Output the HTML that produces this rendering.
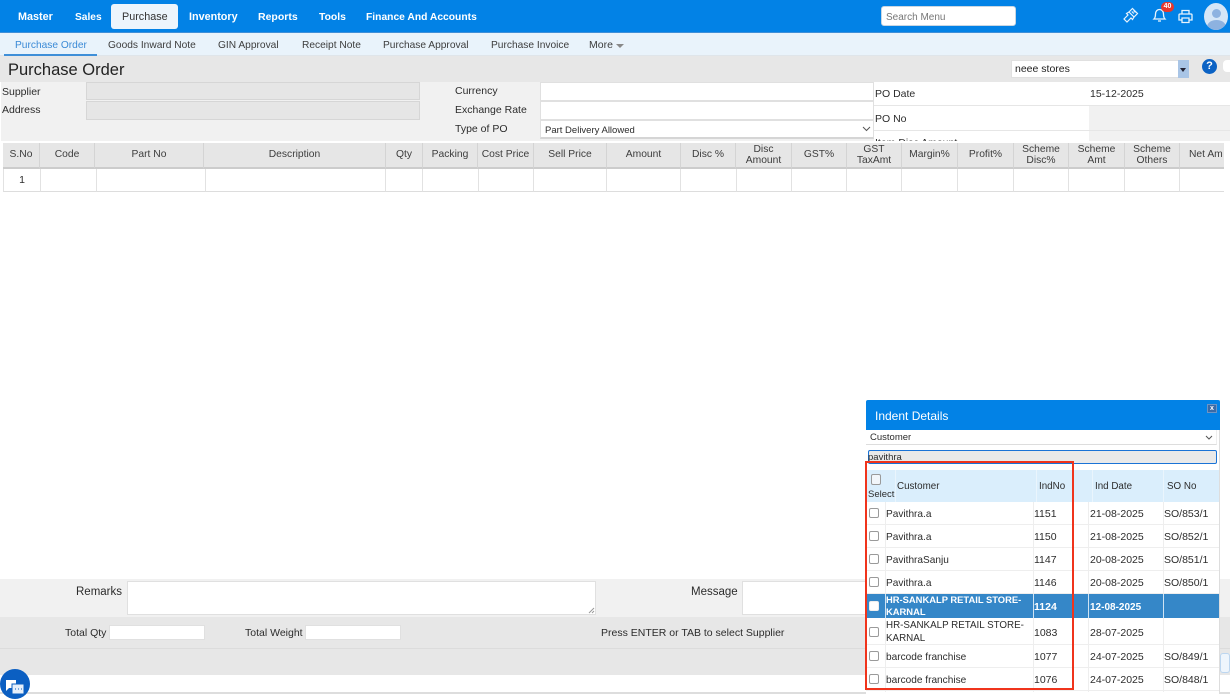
<!DOCTYPE html>
<html><head><meta charset="utf-8"><style>
*{box-sizing:border-box}
html,body{margin:0;padding:0;width:1230px;height:694px;overflow:hidden;background:#fff;font-family:"Liberation Sans",sans-serif;font-size:10.5px;color:#2c2c2c}
div,span,svg{position:absolute}
.t{white-space:nowrap;line-height:13px;margin-top:1px}
.n{color:#fff;font-weight:bold;font-size:10.8px;top:10px;line-height:14px;white-space:nowrap}
.s{top:39px;line-height:13px;white-space:nowrap;color:#3d3d3d;font-size:10.2px}
.h{top:143px;height:26px;background:#e6e6e6;border-right:1px solid #d4d4d4;border-bottom:2px solid #ccc;text-align:center;line-height:11.5px;display:flex;align-items:center;justify-content:center;color:#3d3d3d;font-size:10.3px;overflow:hidden;white-space:pre-line}
.c{top:169px;height:23px;background:#fff;border-right:1px solid #e2e2e2;border-bottom:1px solid #ddd}
.i{background:#fff;border:1px solid #e0e0e0}
.cb{width:10px;height:10px;left:869px;background:#fff;border:1px solid #9a9a9a;border-radius:2px}
.r{left:866px;width:353px;background:#fff;border-bottom:1px solid #eee}
.v{width:1px;background:#eee}
.w{font-size:10.1px}
</style></head><body>

<div style="left:0;top:0;width:1230px;height:32px;background:#0282e6"></div>
<div style="left:0;top:32px;width:1230px;height:1px;background:#3f8fd8"></div>
<div style="left:111px;top:4px;width:67px;height:25px;background:#ecf5fc;border-radius:3px"></div>
<span class="n" style="left:18px">Master</span>
<span class="n" style="left:75px;top:11px;font-size:10.2px">Sales</span>
<span class="n" style="left:122px;color:#333;font-weight:normal;font-size:10.8px">Purchase</span>
<span class="n" style="left:189px">Inventory</span>
<span class="n" style="left:258px;font-size:10.5px">Reports</span>
<span class="n" style="left:319px;top:11px;font-size:10.4px">Tools</span>
<span class="n" style="left:366px;top:11px;font-size:10.3px">Finance And Accounts</span>
<div style="left:881px;top:6px;width:135px;height:20px;background:#fff;border:1px solid #c9d6e2;border-radius:3px"></div>
<span class="t" style="left:886px;top:10px;color:#777;font-size:10px">Search Menu</span>
<svg style="left:1122px;top:7px" width="17" height="17" viewBox="0 0 17 17" fill="none" stroke="#e8f3fc" stroke-width="1.2"><path d="M10.500 1.500l5 5-3.500 3.500-5-5z"/><path d="M7 5L4.500 6.500l1.500 1.500-4 4 3 3 4-4 1.500 1.500L12 10"/><path d="M11.500 3.500l2 2M9.800 4.500l2 2"/></svg>
<svg style="left:1152px;top:7px" width="15" height="16" viewBox="0 0 15 16" fill="none" stroke="#e8f3fc" stroke-width="1.3"><path d="M2 12c1.500-1.500 1.500-3 1.500-5 0-2.500 1.600-4.500 4-4.500s4 2 4 4.500c0 2 0 3.500 1.500 5z"/><path d="M6 14h3"/></svg>
<div style="left:1161px;top:2px;width:13px;height:10px;border-radius:5px;background:#e8372c;color:#fff;font-size:7px;font-weight:bold;line-height:10px;text-align:center">40</div>
<svg style="left:1178px;top:9px" width="15" height="15" viewBox="0 0 15 15" fill="none" stroke="#e8f3fc" stroke-width="1.3"><path d="M4 5V1.500h7V5M2 5h11a1 1 0 0 1 1 1v5h-3M4 11H1V6a1 1 0 0 1 1-1M4 9h7v4.500H4z"/></svg>
<div style="left:1204px;top:3px;width:24px;height:27px;border-radius:50%;background:#d5e6f7;overflow:hidden">
<div style="left:8px;top:6px;width:9px;height:9px;border-radius:50%;background:#8db2e0"></div>
<div style="left:3px;top:17px;width:19px;height:14px;border-radius:50%;background:#8db2e0"></div></div>

<div style="left:0;top:33px;width:1230px;height:22px;background:#e9f3fb"></div>
<div style="left:0;top:55px;width:1230px;height:1px;background:#dfe5ea"></div>
<div style="left:4px;top:54px;width:93px;height:2px;background:#3f8fd8"></div>
<span class="s" style="left:15px;color:#3a8ad6">Purchase Order</span>
<span class="s" style="left:108px">Goods Inward Note</span>
<span class="s" style="left:218px">GIN Approval</span>
<span class="s" style="left:302px">Receipt Note</span>
<span class="s" style="left:383px">Purchase Approval</span>
<span class="s" style="left:491px">Purchase Invoice</span>
<span class="s" style="left:589px;font-size:10.5px">More</span>
<div style="left:616px;top:44px;width:0;height:0;border:4px solid transparent;border-top:4px solid #888;border-bottom:0"></div>

<div style="left:0;top:56px;width:1230px;height:26px;background:#e7e7e7"></div>
<span class="t" style="left:8px;top:59px;font-size:16.5px;line-height:20px;color:#222">Purchase Order</span>
<div style="left:1011px;top:60px;width:178px;height:18px;background:#fff;border:1px solid #e0e0e0"></div>
<span class="t" style="left:1015px;top:62px;font-size:10.5px;color:#222">neee stores</span>
<div style="left:1178px;top:60px;width:11px;height:18px;background:#a9c5e6"></div>
<div style="left:1180px;top:68px;width:0;height:0;border:3.500px solid transparent;border-top:4px solid #223;border-bottom:0"></div>
<div style="left:1202px;top:59px;width:15px;height:15px;border-radius:50%;background:#0b62c4;color:#fff;font-weight:bold;font-size:11px;line-height:15px;text-align:center">?</div>
<div style="left:1223px;top:60px;width:8px;height:12px;border-radius:4px 0 0 4px;background:#fff"></div>

<div style="left:1px;top:82px;width:873px;height:59px;background:#f1f1f1"></div>
<span class="t" style="left:2px;top:85px">Supplier</span>
<span class="t" style="left:2px;top:103px">Address</span>
<div style="left:86px;top:82px;width:334px;height:18px;background:#e6e6e6;border:1px solid #d6d6d6"></div>
<div style="left:86px;top:101px;width:334px;height:19px;background:#e6e6e6;border:1px solid #d6d6d6"></div>
<span class="t" style="left:455px;top:84px">Currency</span>
<span class="t" style="left:455px;top:103px">Exchange Rate</span>
<span class="t" style="left:455px;top:122px">Type of PO</span>
<div class="i" style="left:540px;top:82px;width:334px;height:19px"></div>
<div class="i" style="left:540px;top:101px;width:334px;height:19px"></div>
<div class="i" style="left:540px;top:120px;width:334px;height:19px;border-bottom:2px solid #d5d5d5"></div>
<span class="t" style="left:545px;top:123px;font-size:9.500px">Part Delivery Allowed</span>
<svg style="left:862px;top:126px" width="9" height="6" viewBox="0 0 9 6" fill="none" stroke="#555"><path d="M1 1l3.500 3.500L8 1"/></svg>

<div style="left:874px;top:82px;width:215px;height:59px;background:#fff"></div>
<div style="left:1089px;top:82px;width:141px;height:59px;background:#f1f1f1"></div>
<div style="left:874px;top:105px;width:356px;height:1px;background:#e6e6e6"></div>
<div style="left:874px;top:130px;width:356px;height:1px;background:#e6e6e6"></div>
<div style="left:1089px;top:82px;width:141px;height:23px;background:#fff"></div>
<span class="t" style="left:875px;top:87px">PO Date</span>
<span class="t" style="left:875px;top:112px">PO No</span>
<div style="left:875px;top:136px;width:100px;height:5px;overflow:hidden"><span class="t" style="left:0;top:0">Item Disc Amount</span></div>
<span class="t" style="left:1090px;top:87px">15-12-2025</span>

<div class="h" style="left:3px;width:37px">S.No</div>
<div class="h" style="left:40px;width:55px">Code</div>
<div class="h" style="left:95px;width:109px">Part No</div>
<div class="h" style="left:204px;width:182px">Description</div>
<div class="h" style="left:386px;width:37px">Qty</div>
<div class="h" style="left:423px;width:55px">Packing</div>
<div class="h" style="left:478px;width:56px">Cost Price</div>
<div class="h" style="left:534px;width:73px">Sell Price</div>
<div class="h" style="left:607px;width:74px">Amount</div>
<div class="h" style="left:681px;width:55px">Disc %</div>
<div class="h" style="left:736px;width:56px">Disc
Amount</div>
<div class="h" style="left:792px;width:55px">GST%</div>
<div class="h" style="left:847px;width:55px">GST
TaxAmt</div>
<div class="h" style="left:902px;width:56px">Margin%</div>
<div class="h" style="left:958px;width:56px">Profit%</div>
<div class="h" style="left:1014px;width:55px">Scheme
Disc%</div>
<div class="h" style="left:1069px;width:56px">Scheme
Amt</div>
<div class="h" style="left:1125px;width:55px">Scheme
Others</div>
<div class="h" style="left:1180px;width:44px;justify-content:flex-start;padding-left:9px;border-right:0">Net Am</div>

<div class="c" style="left:3px;width:38px;border-left:1px solid #e2e2e2;text-align:center;line-height:22px">1</div>
<div class="c" style="left:41px;width:56px"></div>
<div class="c" style="left:97px;width:109px"></div>
<div class="c" style="left:206px;width:180px"></div>
<div class="c" style="left:386px;width:37px"></div>
<div class="c" style="left:423px;width:56px"></div>
<div class="c" style="left:479px;width:55px"></div>
<div class="c" style="left:534px;width:73px"></div>
<div class="c" style="left:607px;width:74px"></div>
<div class="c" style="left:681px;width:56px"></div>
<div class="c" style="left:737px;width:55px"></div>
<div class="c" style="left:792px;width:55px"></div>
<div class="c" style="left:847px;width:55px"></div>
<div class="c" style="left:902px;width:56px"></div>
<div class="c" style="left:958px;width:56px"></div>
<div class="c" style="left:1014px;width:55px"></div>
<div class="c" style="left:1069px;width:56px"></div>
<div class="c" style="left:1125px;width:55px"></div>
<div class="c" style="left:1180px;width:44px;border-right:0"></div>

<div style="left:0;top:579px;width:1230px;height:38px;background:#f1f1f1"></div>
<span class="t" style="left:76px;top:585px;font-size:11.500px">Remarks</span>
<div class="i" style="left:127px;top:581px;width:469px;height:34px"></div>
<svg style="left:588px;top:607px" width="7" height="7" viewBox="0 0 7 7" stroke="#999" fill="none"><path d="M1 6l5-5M4 6l2-2"/></svg>
<span class="t" style="left:691px;top:585px;font-size:11.500px">Message</span>
<div class="i" style="left:742px;top:581px;width:130px;height:34px"></div>
<div style="left:0;top:617px;width:1230px;height:32px;background:#e7e7e7;border-bottom:1px solid #dcdcdc"></div>
<span class="t" style="left:65px;top:626px">Total Qty</span>
<div class="i" style="left:109px;top:625px;width:96px;height:15px"></div>
<span class="t" style="left:245px;top:626px">Total Weight</span>
<div class="i" style="left:305px;top:625px;width:96px;height:15px"></div>
<span class="t" style="left:601px;top:626px">Press ENTER or TAB to select Supplier</span>
<div style="left:0;top:649px;width:1230px;height:26px;background:#e7e7e7"></div>
<div style="left:0;top:692px;width:1230px;height:2px;background:#ddd"></div>
<div style="left:1220px;top:653px;width:10px;height:20px;background:#eef5fc;border:1px solid #bcd6f0;border-radius:3px"></div>

<div style="left:0;top:669px;width:30px;height:30px;border-radius:50%;background:#0b5fc2"></div>
<svg style="left:5px;top:679px" width="20" height="15" viewBox="0 0 20 15"><path d="M1 1h10v8H4l-3 3z" fill="#fff"/><path d="M7 5h12v10H7z" fill="#e6effa" stroke="#0b5fc2"/><path d="M10 10h1M13 10h1M16 10h1" stroke="#0b5fc2"/></svg>

<div style="left:866px;top:400px;width:354px;height:294px;background:#fff;border-right:1px solid #ddd"></div>
<div style="left:866px;top:400px;width:354px;height:30px;background:#0282e6;border-radius:2px 2px 0 0"></div>
<span class="t" style="left:875px;top:408px;color:#fff;font-size:12px;line-height:15px">Indent Details</span>
<div style="left:1207px;top:404px;width:10px;height:9px;background:#3a6aa6;border:1px solid #6d94c4;color:#fff;font-size:7px;line-height:7px;text-align:center;font-weight:bold">x</div>
<div style="left:866px;top:430px;width:351px;height:15px;background:#fff;border-bottom:1px solid #ddd;border-right:1px solid #eee"></div>
<span class="t" style="left:870px;top:430px;font-size:9.500px">Customer</span>
<svg style="left:1205px;top:435px" width="8" height="5" viewBox="0 0 8 5" fill="none" stroke="#555"><path d="M1 1l3 3 3-3"/></svg>
<div style="left:868px;top:450px;width:349px;height:14px;background:#e9e9e9;border:1px solid #1a73d6;border-radius:2px"></div>
<span class="t" style="left:868px;top:450px;font-size:9.500px">pavithra</span>

<div style="left:866px;top:470px;width:353px;height:32px;background:#daeefc"></div>
<div style="left:895px;top:470px;width:1px;height:32px;background:#eaf5fd"></div>
<div style="left:1036px;top:470px;width:1px;height:32px;background:#eaf5fd"></div>
<div style="left:1092px;top:470px;width:1px;height:32px;background:#eaf5fd"></div>
<div style="left:1163px;top:470px;width:1px;height:32px;background:#eaf5fd"></div>
<div style="left:871px;top:474px;width:10px;height:11px;background:#f2f6fa;border:1px solid #9a9a9a;border-radius:2px"></div>
<span class="t" style="left:868px;top:487px;font-size:9.500px">Select</span>
<span class="t" style="left:897px;top:479px;font-size:9.800px">Customer</span>
<span class="t" style="left:1039px;top:479px;font-size:9.800px">IndNo</span>
<span class="t" style="left:1095px;top:479px;font-size:9.800px">Ind Date</span>
<span class="t" style="left:1167px;top:479px;font-size:9.800px">SO No</span>

<div class="r" style="top:502px;height:23px"></div>
<div class="r" style="top:525px;height:23px"></div>
<div class="r" style="top:548px;height:23px"></div>
<div class="r" style="top:571px;height:23px"></div>
<div class="r" style="top:618px;height:27px"></div>
<div class="r" style="top:645px;height:23px"></div>
<div class="r" style="top:668px;height:23px"></div>
<div class="v" style="left:885px;top:502px;height:190px"></div>
<div class="v" style="left:1033px;top:502px;height:190px"></div>
<div class="v" style="left:1088px;top:502px;height:190px"></div>
<div class="v" style="left:1163px;top:502px;height:190px"></div>
<div style="left:867px;top:594px;width:352px;height:24px;background:#3587c8"></div>
<div style="left:885px;top:594px;width:1px;height:24px;background:#cfe3f3"></div>
<div style="left:1033px;top:594px;width:1px;height:24px;background:#cfe3f3"></div>
<div style="left:1088px;top:594px;width:1px;height:24px;background:#cfe3f3"></div>
<div style="left:1163px;top:594px;width:1px;height:24px;background:#cfe3f3"></div>

<div class="cb" style="top:508px"></div><span class="t w" style="left:886px;top:507px">Pavithra.a</span><span class="t" style="left:1034px;top:507px">1151</span><span class="t" style="left:1090px;top:507px">21-08-2025</span><span class="t" style="left:1164px;top:507px">SO/853/1</span>
<div class="cb" style="top:531px"></div><span class="t w" style="left:886px;top:530px">Pavithra.a</span><span class="t" style="left:1034px;top:530px">1150</span><span class="t" style="left:1090px;top:530px">21-08-2025</span><span class="t" style="left:1164px;top:530px">SO/852/1</span>
<div class="cb" style="top:554px"></div><span class="t w" style="left:886px;top:553px">PavithraSanju</span><span class="t" style="left:1034px;top:553px">1147</span><span class="t" style="left:1090px;top:553px">20-08-2025</span><span class="t" style="left:1164px;top:553px">SO/851/1</span>
<div class="cb" style="top:577px"></div><span class="t w" style="left:886px;top:576px">Pavithra.a</span><span class="t" style="left:1034px;top:576px">1146</span><span class="t" style="left:1090px;top:576px">20-08-2025</span><span class="t" style="left:1164px;top:576px">SO/850/1</span>
<div class="cb" style="top:601px;border-color:#eee"></div><span class="t" style="left:886px;top:593px;color:#fff;font-weight:bold;font-size:9.400px;line-height:12px">HR-SANKALP RETAIL STORE-<br>KARNAL</span><span class="t" style="left:1034px;top:600px;color:#fff;font-weight:bold">1124</span><span class="t" style="left:1090px;top:600px;color:#fff;font-weight:bold;font-size:10px">12-08-2025</span>
<div class="cb" style="top:627px"></div><span class="t" style="left:886px;top:618px;line-height:13px;font-size:9.800px">HR-SANKALP RETAIL STORE-<br>KARNAL</span><span class="t" style="left:1034px;top:626px">1083</span><span class="t" style="left:1090px;top:626px">28-07-2025</span>
<div class="cb" style="top:651px"></div><span class="t w" style="left:886px;top:650px">barcode franchise</span><span class="t" style="left:1034px;top:650px">1077</span><span class="t" style="left:1090px;top:650px">24-07-2025</span><span class="t" style="left:1164px;top:650px">SO/849/1</span>
<div class="cb" style="top:674px"></div><span class="t w" style="left:886px;top:673px">barcode franchise</span><span class="t" style="left:1034px;top:673px">1076</span><span class="t" style="left:1090px;top:673px">24-07-2025</span><span class="t" style="left:1164px;top:673px">SO/848/1</span>

<div style="left:865px;top:461px;width:209px;height:229px;border:2px solid #f0341c"></div>
</body></html>
